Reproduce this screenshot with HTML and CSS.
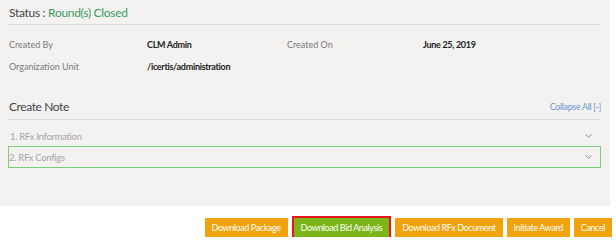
FILE: index.html
```html
<!DOCTYPE html>
<html>
<head>
<meta charset="utf-8">
<link rel="stylesheet" href="styles.css">
</head>
<body>
<div class="panel">
  <div class="status"><span class="status-label">Status : </span><span class="status-value">Round(s) Closed</span></div>
  <div class="meta">
    <div class="meta-label">Created By</div>
    <div class="meta-value">CLM Admin</div>
    <div class="meta-label">Created On</div>
    <div class="meta-value">June 25, 2019</div>
    <div class="meta-label">Organization Unit</div>
    <div class="meta-value">/icertis/administration</div>
  </div>
  <div class="note-head">
    <div class="note-title">Create Note</div>
    <div class="collapse">Collapse All [-]</div>
  </div>
  <div class="section"><span>1. RFx Information</span><svg class="chev" width="7" height="4" viewBox="0 0 7 4"><path d="M0.5 0.5 L3.5 3.2 L6.5 0.5" fill="none" stroke="#8a8a8a" stroke-width="1"/></svg></div>
  <div class="section active"><span>2. RFx Configs</span><svg class="chev" width="7" height="4" viewBox="0 0 7 4"><path d="M0.5 0.5 L3.5 3.2 L6.5 0.5" fill="none" stroke="#8a8a8a" stroke-width="1"/></svg></div>
</div>
<div class="footer">
  <button class="btn">Download Package</button>
  <button class="btn btn-green">Download Bid Analysis</button>
  <button class="btn">Download RFx Document</button>
  <button class="btn">Initiate Award</button>
  <button class="btn">Cancel</button>
</div>
</body>
</html>
```
FILE: styles.css
```css
html, body {
  margin: 0;
  padding: 0;
  background: #ffffff;
  font-family: Lato, "Open Sans", sans-serif;
}
.panel {
  width: 610px;
  height: 206px;
  box-sizing: border-box;
  background: #f3f2f1;
  padding: 5px 9px 0 8px;
}
.status {
  font-size: 12px;
  line-height: 16px;
  letter-spacing: -0.3px;
  padding: 0 0 3px 1px;
  border-bottom: 1px solid #dcdcdc;
}
.status-label { color: #444; }
.status-value { color: #3c9a5f; }
.meta {
  display: grid;
  grid-template-columns: 138px 140px 136px 1fr;
  row-gap: 9px;
  padding: 13px 0 0 1px;
  font-size: 9px;
  line-height: 13px;
}
.meta-label { color: #7a7a7a; }
.meta-value { color: #222; font-weight: 700; letter-spacing: -0.3px; }
.note-head {
  display: flex;
  justify-content: space-between;
  align-items: flex-end;
  margin-top: 26px;
  padding: 0 0 4px 1px;
  border-bottom: 1px solid #dcdcdc;
}
.note-title { font-size: 12px; line-height: 16px; color: #444; letter-spacing: -0.4px; }
.collapse { font-size: 9px; line-height: 12px; color: #6b95cc; padding-bottom: 2px; letter-spacing: -0.35px; }
.section {
  display: flex;
  justify-content: space-between;
  align-items: center;
  height: 22px;
  box-sizing: border-box;
  padding: 0 8px 0 1px;
  font-size: 9.5px;
  letter-spacing: -0.3px;
  color: #a5a5a5;
  border: 1px solid transparent;
  margin-top: 5px;
}
.section + .section { margin-top: -1px; }
.section.active {
  border-color: #7ccc7c;
  padding-left: 0;
}
.chev { display: block; }
.footer {
  display: flex;
  justify-content: flex-end;
  align-items: center;
  gap: 4px;
  padding: 12px 4px 0 0;
}
.btn {
  font-family: Lato, "Open Sans", sans-serif;
  font-size: 9px;
  letter-spacing: -0.4px;
  color: #ffffff;
  background: #f2a20c;
  border: none;
  height: 19px;
  padding: 0 7px;
  margin: 0;
}
.btn-green {
  background: #7cb518;
  outline: 2px solid #e8141c;
  outline-offset: 0;
  margin: 0 2px;
}
```
